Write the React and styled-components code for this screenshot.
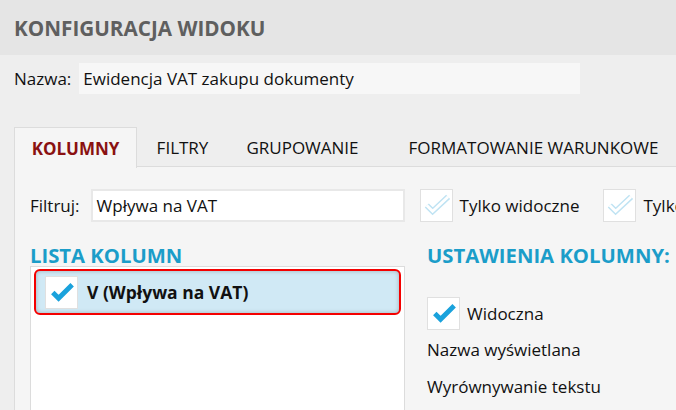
import React from 'react';
import styled, { createGlobalStyle } from 'styled-components';

const GlobalStyle = createGlobalStyle`
  html, body {
    margin: 0;
    padding: 0;
    overflow: hidden;
    background: #eeeeee;
  }
  body {
    font-family: "Open Sans", "Noto Sans", sans-serif;
    color: #111;
  }
  * {
    box-sizing: border-box;
  }
`;

const Page = styled.div`
  width: 676px;
  height: 410px;
  overflow: hidden;
  background: #eeeeee;
`;

const Header = styled.div`
  height: 55px;
  background: #e5e5e5;
  display: flex;
  align-items: center;
  padding-left: 14px;
`;

const Title = styled.h1`
  margin: 0;
  font-size: 20.7px;
  font-weight: 700;
  color: #5f5f5f;
  white-space: nowrap;
`;

const NameRow = styled.div`
  display: flex;
  align-items: center;
  margin-top: 8px;
  padding-left: 14px;
  font-size: 17px;
  white-space: nowrap;
`;

const NameBox = styled.div`
  width: 501px;
  height: 31px;
  flex: none;
  margin-left: 8px;
  background: #f7f7f7;
  display: flex;
  align-items: center;
  padding-left: 4px;
`;

const TabBar = styled.div`
  display: flex;
  margin-top: 33px;
  margin-left: 14px;
  height: 40px;
  border-bottom: 1px solid #dcdcdc;
`;

const Tab = styled.div`
  width: ${p => p.w}px;
  flex: none;
  display: flex;
  align-items: center;
  justify-content: center;
  font-size: 17px;
  white-space: nowrap;
  color: ${p => (p.active ? '#8a1111' : '#111')};
  font-weight: ${p => (p.active ? 700 : 400)};
  background: ${p => (p.active ? '#f5f5f5' : 'transparent')};
  border: 1px solid ${p => (p.active ? '#dcdcdc' : 'transparent')};
  border-bottom: none;
  height: ${p => (p.active ? '41px' : '40px')};
`;

const Panel = styled.div`
  margin-left: 14px;
  background: #f5f5f5;
  border-left: 1px solid #dcdcdc;
  padding: 22px 0 0 15px;
  height: 300px;
`;

const FilterRow = styled.div`
  display: flex;
  align-items: center;
  font-size: 17px;
  white-space: nowrap;
`;

const FilterInput = styled.div`
  width: 314px;
  height: 33px;
  flex: none;
  margin-left: 11px;
  background: #fff;
  border: 2px solid #e8e8e8;
  display: flex;
  align-items: center;
  padding-left: 4px;
`;

const Box = styled.div`
  width: 33px;
  height: 33px;
  flex: none;
  background: #fff;
  border: 1px solid #e0e0e0;
  display: flex;
  align-items: center;
  justify-content: center;
`;

const CheckLabel = styled.span`
  margin-left: 7px;
  margin-right: ${p => p.mr || 0}px;
  flex: none;
`;

const Columns = styled.div`
  display: flex;
  gap: 22px;
`;

const LeftCol = styled.div`
  width: 375px;
  flex: none;
`;

const RightCol = styled.div`
  flex: 1;
`;

const Heading = styled.h2`
  margin: 22px 0 0;
  height: 22px;
  line-height: 22px;
  font-size: 20.3px;
  font-weight: 700;
  color: #1b9dc9;
  white-space: nowrap;
`;

const ListBox = styled.div`
  height: 160px;
  background: #fff;
  border: 1px solid #dcdcdc;
  padding: 2px 3px;
`;

const Row = styled.div`
  height: 46px;
  display: flex;
  align-items: center;
  padding-left: 9px;
  background: #d0e9f5;
  border: 2px solid #f40000;
  border-radius: 6px;
  box-shadow: inset 0 0 4px rgba(0, 0, 0, 0.25);
  font-size: 17.5px;
  font-weight: 700;
  white-space: nowrap;
`;

const RowText = styled.span`
  margin-left: 9px;
`;

const SettingsCheck = styled.div`
  display: flex;
  align-items: center;
  margin-top: 31px;
  font-size: 17px;
`;

const SettingLine = styled.div`
  font-size: 17px;
  line-height: 20px;
  white-space: nowrap;
  margin-top: ${p => p.mt}px;
`;

const Check = ({ light }) => (
  <svg width="31" height="31" viewBox="0 0 32 32">
    {light ? (
      <>
        <polyline points="6,16 12,22 28,7" fill="none" stroke="#bfe3f3" strokeWidth="6" strokeLinejoin="miter" />
        <polyline points="6,16 12,22 28,7" fill="none" stroke="#fff" strokeWidth="3" strokeLinejoin="miter" />
      </>
    ) : (
      <polyline points="7,16 13,22 27,8" fill="none" stroke="#1aa2dc" strokeWidth="5" strokeLinejoin="miter" />
    )}
  </svg>
);

export default function App() {
  return (
    <Page>
      <GlobalStyle />
      <Header>
        <Title>KONFIGURACJA WIDOKU</Title>
      </Header>
      <NameRow>
        <span>Nazwa:</span>
        <NameBox>Ewidencja VAT zakupu dokumenty</NameBox>
      </NameRow>
      <TabBar>
        <Tab w={123} active>KOLUMNY</Tab>
        <Tab w={91}>FILTRY</Tab>
        <Tab w={149}>GRUPOWANIE</Tab>
        <Tab w={313}>FORMATOWANIE WARUNKOWE</Tab>
      </TabBar>
      <Panel>
        <FilterRow>
          <span>Filtruj:</span>
          <FilterInput>Wpływa na VAT</FilterInput>
          <Box style={{ marginLeft: 15 }}>
            <Check light />
          </Box>
          <CheckLabel mr={24}>Tylko widoczne</CheckLabel>
          <Box>
            <Check light />
          </Box>
          <CheckLabel>Tylko zaznaczone</CheckLabel>
        </FilterRow>
        <Columns>
          <LeftCol>
            <Heading>LISTA KOLUMN</Heading>
            <ListBox>
              <Row>
                <Box>
                  <Check />
                </Box>
                <RowText>V (Wpływa na VAT)</RowText>
              </Row>
            </ListBox>
          </LeftCol>
          <RightCol>
            <Heading>USTAWIENIA KOLUMNY:</Heading>
            <SettingsCheck>
              <Box>
                <Check />
              </Box>
              <CheckLabel>Widoczna</CheckLabel>
            </SettingsCheck>
            <SettingLine mt={10}>Nazwa wyświetlana</SettingLine>
            <SettingLine mt={17}>Wyrównywanie tekstu</SettingLine>
          </RightCol>
        </Columns>
      </Panel>
    </Page>
  );
}
